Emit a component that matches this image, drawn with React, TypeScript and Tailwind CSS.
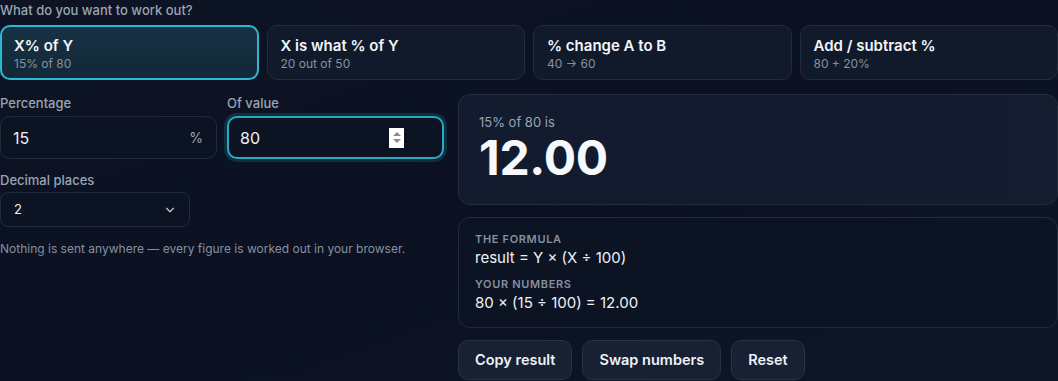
import { ChevronDown } from "lucide-react";

const modes = [
  { title: "X% of Y", sub: "15% of 80", active: true },
  { title: "X is what % of Y", sub: "20 out of 50" },
  { title: "% change A to B", sub: "40 → 60" },
  { title: "Add / subtract %", sub: "80 + 20%" },
];

function Spinner() {
  return (
    <span className="flex h-[20px] w-[15px] flex-col items-center justify-center gap-[3px] bg-white">
      <span className="h-0 w-0 border-x-[4px] border-b-[4px] border-x-transparent border-b-[#8a8a8a]" />
      <span className="h-0 w-0 border-x-[4px] border-t-[4px] border-x-transparent border-t-[#8a8a8a]" />
    </span>
  );
}

export default function App() {
  return (
    <div className="h-[381px] w-[1058px] overflow-hidden bg-gradient-to-br from-[#0d1424] via-[#0b1120] to-[#0e1628] font-['Inter','Liberation_Sans',sans-serif] text-white">
      {/* mode picker */}
      <p className="pt-[1px] text-[13px] font-medium leading-[18px] text-[#9aa4b4]">
        What do you want to work out?
      </p>
      <div className="mt-[6px] grid grid-cols-4 gap-2">
        {modes.map((m) => (
          <div
            key={m.title}
            className={
              m.active
                ? "h-[55px] rounded-[10px] border-2 border-[#2bb8d2] bg-gradient-to-b from-[#173244] to-[#132838] px-[12px] pt-[9px]"
                : "h-[55px] rounded-[10px] border border-[#222c3d] bg-[#111a2b] px-[13px] pt-[10px]"
            }
          >
            <div className="text-[15px] font-semibold leading-[20px] text-[#f2f5f9]">{m.title}</div>
            <div className="text-[12px] leading-[16px] text-[#8690a0]">{m.sub}</div>
          </div>
        ))}
      </div>

      <div className="mt-[14px] grid grid-cols-[444px_1fr] gap-[14px]">
        {/* inputs */}
        <div>
          <div className="grid grid-cols-2 gap-[10px]">
            <div>
              <div className="text-[13px] font-medium leading-[18px] text-[#9aa4b4]">Percentage</div>
              <div className="mt-[4px] flex h-[43px] items-center justify-between rounded-[10px] border border-[#222c3d] bg-[#0c1322] px-[12px]">
                <span className="text-[16px] text-[#eef2f7]">15</span>
                <span className="pr-[1px] text-[14px] text-[#9aa4b4]">%</span>
              </div>
            </div>
            <div>
              <div className="text-[13px] font-medium leading-[18px] text-[#9aa4b4]">Of value</div>
              <div className="mt-[4px] flex h-[43px] items-center justify-between rounded-[10px] border-2 border-[#2aa9c0] bg-[#0c1322] pl-[11px] pr-[38px] shadow-[0_0_0_3px_rgba(34,184,207,0.18)]">
                <span className="text-[16px] text-[#eef2f7]">80</span>
                <Spinner />
              </div>
            </div>
          </div>

          <div className="mt-[12px] text-[13px] font-medium leading-[18px] text-[#9aa4b4]">Decimal places</div>
          <div className="mt-[3px] flex h-[35px] w-[190px] items-center justify-between rounded-[8px] border border-[#222c3d] bg-[#0c1322] pl-[13px] pr-[12px]">
            <span className="text-[13px] text-[#eef2f7]">2</span>
            <ChevronDown className="h-[14px] w-[14px] text-[#c3cad5]" strokeWidth={2} />
          </div>

          <p className="mt-[14px] text-[12px] leading-[16px] text-[#8690a0]">
            Nothing is sent anywhere — every figure is worked out in your browser.
          </p>
        </div>

        {/* result */}
        <div>
          <div className="h-[111px] rounded-[12px] border border-[#222c3d] bg-gradient-to-r from-[#131c2e] via-[#121b2d] to-[#141d30] px-[20px] pt-[18px]">
            <div className="text-[13px] leading-[18px] text-[#9aa4b4]">15% of 80 is</div>
            <div className="mt-[1px] text-[48px] font-bold leading-[52px] tracking-[-0.3px] text-[#f6f8fb]">12.00</div>
          </div>

          <div className="mt-[12px] h-[111px] rounded-[12px] border border-[#222c3d] bg-[#0c1322] px-[16px] pt-[14px]">
            <div className="text-[11px] font-semibold uppercase leading-[15px] tracking-[0.06em] text-[#8690a0]">The formula</div>
            <div className="mt-[1px] text-[15px] leading-[20px] text-[#eef2f7]">result = Y × (X ÷ 100)</div>
            <div className="mt-[9px] text-[11px] font-semibold uppercase leading-[15px] tracking-[0.06em] text-[#8690a0]">Your numbers</div>
            <div className="mt-[1px] text-[15px] leading-[20px] text-[#eef2f7]">80 × (15 ÷ 100) = 12.00</div>
          </div>

          <div className="mt-[12px] flex gap-[10px]">
            {["Copy result", "Swap numbers", "Reset"].map((b) => (
              <button
                key={b}
                className="h-[40px] rounded-[10px] border border-[#283245] bg-[#172133] px-[16px] text-[14.5px] font-semibold text-[#eef2f7]"
              >
                {b}
              </button>
            ))}
          </div>
        </div>
      </div>
    </div>
  );
}
